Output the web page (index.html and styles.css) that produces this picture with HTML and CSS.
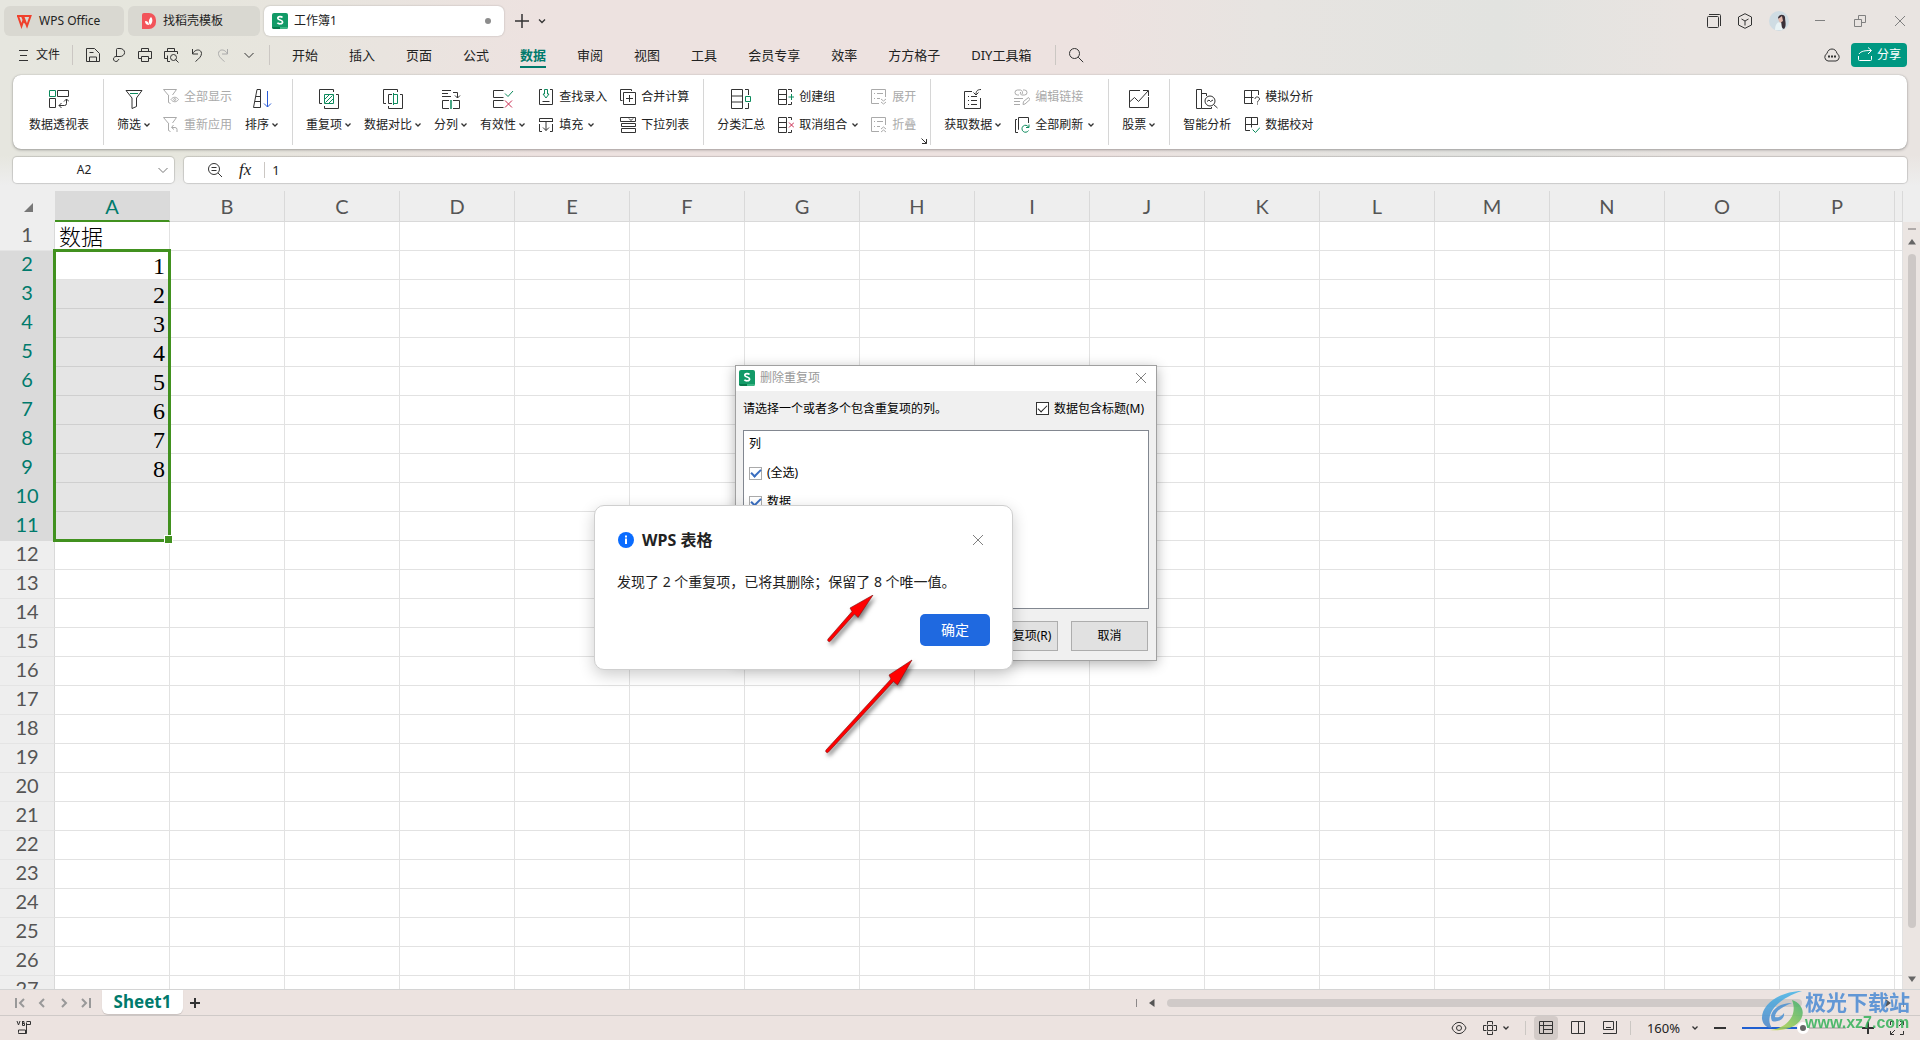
FILE: index.html
```html
<!DOCTYPE html>
<html lang="zh-CN">
<head>
<meta charset="utf-8">
<title>工作簿1 - WPS Office</title>
<link rel="stylesheet" href="styles.css">
</head>
<body>
<svg class="defs" aria-hidden="true">
  <symbol id="chev" viewBox="0 0 6 6"><path d="M0.5 1.5 3 4 5.500 1.500" stroke-width="1.300"/></symbol>
  <symbol id="cross" viewBox="0 0 12 12"><path d="M1 1 11 11M11 1 1 11"/></symbol>
  <symbol id="sheet-logo" viewBox="0 0 16 16">
    <rect width="16" height="16" rx="2" fill="#129a67" stroke="none"/>
    <path d="M0 14h8v2H2a2 2 0 0 1-2-2z" fill="#077a4c" stroke="none"/><path d="M8 14h8a2 2 0 0 1-2 2H8z" fill="#3cb684" stroke="none"/>
    <path d="M10.500 4.500C9.500 3.200 5.800 3 5.800 5.200 5.800 7.500 10.600 6.500 10.600 9 10.600 11.300 6.500 11.200 5.400 9.700" stroke="#fff" stroke-width="1.700"/>
  </symbol>
</svg>
<div class="app">
  <header class="chrome">
    <div class="titlebar">
      <button class="doc-tab doc-home"><svg class="ic" width="16" height="16"><path d="M1 3h13.500L11 13 8 5.500 5.500 13 2 3M6 3l3 7" stroke="#f0402c" stroke-width="2"/></svg>WPS Office</button>
      <button class="doc-tab doc-docer"><svg class="ic" width="14" height="16"><path d="M0 2a2 2 0 0 1 2-2h5a7 7 0 0 1 7 7v2a7 7 0 0 1-7 7H0z" fill="#f2545a" stroke="none"/><path d="M3 8c3 0 4 2 4 4-2 0-4-1-4-4zM8 12c-2-3-1-6 1-8 2 2 2 6-1 8z" fill="#fff" stroke="none"/></svg>找稻壳模板</button>
      <button class="doc-tab doc-current"><svg class="ic" width="16" height="16"><use href="#sheet-logo"/></svg>工作簿1<span class="unsaved"></span></button>
      <button class="bare new-tab" aria-label="新建"><svg class="ic" width="14" height="14"><path d="M7 0v14M0 7h14" stroke-width="1.500"/></svg></button>
      <button class="bare" aria-label="标签列表"><svg class="ic" width="8" height="8"><path d="M1 2.500 4 5.500 7 2.500" stroke-width="1.300"/></svg></button>
      <div class="window-tools">
        <button class="bare" aria-label="窗口"><svg class="ic" width="14" height="14"><rect x=".5" y="2.500" width="11" height="11" rx="1"/><path d="M2 .5h10.500a1 1 0 0 1 1 1V12"/></svg></button>
        <button class="bare" aria-label="应用"><svg class="ic" width="16" height="16"><path d="M8 .7 14.500 4v8L8 15.300 1.500 12V4zM4.500 6 8 8l3.500-2M8 8v4.500"/></svg></button>
        <button class="bare" aria-label="账户"><svg width="20" height="20"><circle cx="10" cy="10" r="10" fill="#cfdce3"/><path d="M6 19c0-5 2-8 5-8s3 4 2 8z" fill="#e9f3f5"/><path d="M9 7c1-4 6-4 7-1 0 4 2 9-1 12-3-1-2-4-3-7z" fill="#3a3038"/><path d="M9 8l4-3 1 5-3 2z" fill="#e3b9ad"/></svg></button>
      </div>
      <div class="window-buttons">
        <button class="bare" aria-label="最小化"><svg class="ic pale" width="12" height="12"><path d="M1 5.500h10"/></svg></button>
        <button class="bare" aria-label="还原"><svg class="ic pale" width="12" height="12"><path d="M.5 4.500h7v7h-7zM4.500 4V.5h7v7H8"/></svg></button>
        <button class="bare" aria-label="关闭"><svg class="ic pale" width="12" height="12"><use href="#cross"/></svg></button>
      </div>
    </div>

    <nav class="menubar">
      <button class="bare file-menu"><svg class="ic" width="9" height="12"><path d="M0 1.500h9M1 6.500h7M0 11.500h9"/></svg>文件</button>
      <span class="rule"></span>
      <div class="quick">
        <button class="bare" aria-label="保存"><svg class="ic" width="16" height="16"><path d="M1.500 1.500h8l5 5v8h-13zM4.500 14v-4h7v4M4.500 5.500h4"/></svg></button>
        <button class="bare" aria-label="输出为PDF"><svg class="ic" width="16" height="16"><path d="M5.500 9V2.500a1 1 0 0 1 1-1H9a4 3.500 0 0 1 0 8H5a2.500 2.500 0 1 0 2 4L8 12"/></svg></button>
        <button class="bare" aria-label="打印"><svg class="ic" width="16" height="16"><path d="M4.500 4V1.500h7V4M4 11.500H1.500v-7h13v7H12M4.500 9.500h7v5h-7z"/></svg></button>
        <button class="bare" aria-label="打印预览"><svg class="ic" width="16" height="16"><path d="M4.500 4V1.500h7V4M4 11.500H1.500v-7h13V7M4.500 8.500v6H7"/><circle cx="10.500" cy="10.500" r="3"/><path d="m12.500 12.500 3 3"/></svg></button>
        <button class="bare" aria-label="撤销"><svg class="ic" width="16" height="16"><path d="M3.500 2v5H9M3.500 7C6 1.500 12.500 2 12.500 6.500c0 3-3 5.500-6 8"/></svg></button>
        <button class="bare" aria-label="恢复"><svg class="ic dim" width="16" height="16"><path d="M12.500 2v5H7M12.500 7C10 1.500 3.500 2 3.500 6.500c0 3 3 5.500 6 8"/></svg></button>
        <button class="bare" aria-label="更多"><svg class="ic" width="16" height="16"><path d="m3.500 6 4.500 4.500L12.500 6"/></svg></button>
      </div>
      <span class="rule"></span>
      <div class="tabs">
        <button class="bare">开始</button><button class="bare">插入</button><button class="bare">页面</button><button class="bare">公式</button><button class="bare active">数据</button><button class="bare">审阅</button><button class="bare">视图</button><button class="bare">工具</button><button class="bare">会员专享</button><button class="bare">效率</button><button class="bare">方方格子</button><button class="bare">DIY工具箱</button>
      </div>
      <span class="rule after-tabs"></span>
      <button class="bare" aria-label="搜索"><svg class="ic" width="16" height="16"><circle cx="6.500" cy="6.500" r="5"/><path d="m10.200 10.200 5 5"/></svg></button>
      <div class="menubar-end">
        <button class="bare" aria-label="云端"><svg class="ic" width="18" height="16"><path d="M5 14a4 4 0 0 1-1-7.500C5 .5 13 .5 14 6.500A4 4 0 0 1 13 14z"/><path d="M5 9.500h2M8 9.500h2M11 9.500h2" stroke-width="2"/></svg></button>
        <button class="share"><svg class="ic" width="16" height="16"><path d="M2 7C4 4 8 3.500 14 3.500M11 0.500l3.500 3-3.500 3.500M1.500 9v3.500a1 1 0 0 0 1 1h11a1 1 0 0 0 1-1V9"/></svg>分享</button>
      </div>
    </nav>

    <section class="ribbon" aria-label="数据">
      <div class="group first">
        <button class="big"><svg class="ic" width="20" height="20"><path d="M.5 1.500h6v6h-6z" class="g"/><path d="M8.500 1.500h11v6h-11zM.5 9.500h6v9h-6zM10 16.500h5.500a2 2 0 0 0 2-2V10M12.500 14 10 16.500l2.500 2.500M15 12.500l2.500-2.500 2.500 2.500"/></svg><span>数据透视表</span></button>
      </div>
      <div class="group">
        <button class="big"><svg class="ic" width="20" height="20"><path d="M2 1.500h16L12.500 9v8.500l-4.500 2V9z"/><path d="M6 4.500h8" class="g"/></svg><span>筛选<svg class="ic" width="6" height="6"><use href="#chev"/></svg></span></button>
        <div class="stack">
          <button class="small" disabled><svg class="ic" width="16" height="16"><path d="M6 7 .5.5h13L9.500 6M5.500 7v6.500l2 1M8 10.500c2-3 5.500-3 7.500 0-2 3-5.500 3-7.500 0z"/><circle cx="11.700" cy="10.500" r="1"/></svg>全部显示</button>
          <button class="small" disabled><svg class="ic" width="16" height="16"><path d="M6 7 .5.5h13L9.500 6M5.500 7v6.500l2 1M10.500 8 8.500 10.500l2.500 2M9 10.500h3a2 2 0 0 1 2 2v2.500"/></svg>重新应用</button>
        </div>
        <button class="big"><svg class="ic" width="20" height="20"><path d="M5 .5h3.500v18M5 .5 1.500 18.500h7M4 7.500h4.500M3 12.500h5.500"/><path d="M15.500 2v16M12 14.500l3.500 3.500 3.500-3.500" class="b"/></svg><span>排序<svg class="ic" width="6" height="6"><use href="#chev"/></svg></span></button>
      </div>
      <div class="group">
        <button class="big"><svg class="ic" width="20" height="20"><path d="M3 14.500H.5V.5h14V3M17 5.500h2.500v14h-14V17"/><path d="M5.500 5.500h9v9h-9zM5.500 10.500l5-5M6.500 13.500l7-7M9.500 14.500l5-5" class="g"/></svg><span>重复项<svg class="ic" width="6" height="6"><use href="#chev"/></svg></span></button>
        <button class="big"><svg class="ic" width="20" height="20"><path d="M3 14.500H.5V.5h14V3M17 5.500h2.500v14h-14V17M9 5.500H5.500v9H9"/><path d="M10.500 5.500h4v9h-4zM10.500 4v12" class="g"/></svg><span>数据对比<svg class="ic" width="6" height="6"><use href="#chev"/></svg></span></button>
        <button class="big"><svg class="ic" width="20" height="20"><path d="M1 1.500h9M1 4.500h6M1 7.500h9M12 3.500h4.500V9M14 6.500 16.500 9 19 6.500M8 11.500H1.500v8H8M12 11.500h6.500v8H12"/><path d="M10 11v9" class="g" stroke-width="1.500"/></svg><span>分列<svg class="ic" width="6" height="6"><use href="#chev"/></svg></span></button>
        <button class="big"><svg class="ic" width="22" height="20"><path d="M11.500 1.500h-10v7h10M11.500 11.500h-10v7h10"/><path d="m13 4.500 3 3L21 2" class="g"/><path d="m13 11.500 7 7M20 11.500l-7 7" class="r"/></svg><span>有效性<svg class="ic" width="6" height="6"><use href="#chev"/></svg></span></button>
        <div class="stack">
          <button class="small"><svg class="ic" width="16" height="16"><path d="M4 .5H1.500v15h13V.5H12M4.500 12.500h7"/><path d="M6.500.5h3V5H11L8 9 5 5h1.500z" class="g"/></svg>查找录入</button>
          <button class="small"><svg class="ic" width="16" height="16"><path d="M4 14.500H1.500V7M12 14.500h2.500V7M1.500 5V1.500h13V5M1 4.500h14M8 5v8.500M5 10.500l3 3 3-3"/></svg>填充<svg class="ic more" width="6" height="6"><use href="#chev"/></svg></button>
        </div>
        <div class="stack">
          <button class="small"><svg class="ic" width="16" height="16"><path d="M2.500 11.500h-2v-11h11V2M3.500 3.500h12v12h-12zM9.500 6v7M6 9.500h7"/></svg>合并计算</button>
          <button class="small"><svg class="ic" width="16" height="16"><path d="M.5.5h15v4H.5zM1.500 6.500h14v3h-14zM1.500 11.500h14v4h-14zM9 1.500l2 2 2-2"/></svg>下拉列表</button>
        </div>
      </div>
      <div class="group">
        <button class="big"><svg class="ic" width="22" height="20"><path d="M1.500.5h11v19h-11zM1.500 7h11M1.500 13h11M15 .5h3.500V6M18.500 14v5.500H15"/><path d="M15.500 7.500h5v5h-5z" class="g"/></svg><span>分类汇总</span></button>
        <div class="stack">
          <button class="small"><svg class="ic" width="16" height="16"><path d="M.5.5h8v15h-8zM.5 5.500h8M.5 10.500h8M10 .5h3.500V3M13.500 13v2.500H10"/><path d="M13.500 5v6M10.500 8H16" class="g"/></svg>创建组</button>
          <button class="small"><svg class="ic" width="16" height="16"><path d="M.5.5h8v15h-8zM.5 5.500h8M.5 10.500h8M10 .5h3.500V3M13.500 13v2.500H10"/><path d="m11 5.500 5 5M16 5.500l-5 5" class="r"/></svg>取消组合<svg class="ic more" width="6" height="6"><use href="#chev"/></svg></button>
        </div>
        <div class="stack">
          <button class="small" disabled><svg class="ic" width="16" height="16"><path d="M8 14.500H.5V.5h14V8M3 4.500h1M6 4.500h6M3 9.500h1M6 9.500h3M10 10l2.500 2L15 10M10 13l2.500 2 2.500-2"/></svg>展开</button>
          <button class="small" disabled><svg class="ic" width="16" height="16"><path d="M8 14.500H.5V.5h14V8M3 4.500h1M6 4.500h6M3 9.500h1M6 9.500h3M10 12l2.500-2 2.500 2M10 15l2.500-2 2.500 2"/></svg>折叠</button>
        </div>
        <button class="bare launcher" aria-label="更多设置"><svg class="ic" width="8" height="8"><path d="m1.500 1.500 5 5M6.500 2v4.500H2"/></svg></button>
      </div>
      <div class="group">
        <button class="big"><svg class="ic" width="20" height="20"><path d="M9 2.500H1.500v17h16V9M5 7.500h1M8 7.500h6M5 11.500h1M8 11.500h6M5 15.500h1M8 15.500h6M18 .5c-4 0-5 2-5 5M10.500 3.500 13 6l2.500-2.500"/></svg><span>获取数据<svg class="ic" width="6" height="6"><use href="#chev"/></svg></span></button>
        <div class="stack">
          <button class="small" disabled><svg class="ic" width="16" height="16"><path d="M5 6H3.500a2.500 2.500 0 0 1 0-5h3a2.500 2.500 0 0 1 1.500 4M9 1h1.500a2.500 2.500 0 0 1 0 5h-3a2.500 2.500 0 0 1-1-3M0 9.500h9M0 12.500h6M0 15.500h6M9 15.500l.5-3 5-4 1.500 2-5 4.500z"/></svg>编辑链接</button>
          <button class="small"><svg class="ic" width="16" height="16"><path d="M3 2.500H1.500v13H4M5 12.500h-.500V.5h10V6"/><path d="M14.500 10a3.500 3.500 0 1 0 0 3.500M15 7.500v3h-3" class="g"/></svg>全部刷新<svg class="ic more" width="6" height="6"><use href="#chev"/></svg></button>
        </div>
      </div>
      <div class="group">
        <button class="big"><svg class="ic" width="22" height="20"><path d="M12 1.500H1.500v17h19V8M1.500 13l5-4.500 4 4L20 2M15 1.500h5.500V7"/></svg><span>股票<svg class="ic" width="6" height="6"><use href="#chev"/></svg></span></button>
      </div>
      <div class="group last">
        <button class="big"><svg class="ic" width="22" height="20"><path d="M.5.5h5v19h-5zM5.500 4.500h5V7M5.500 19.500h10V18"/><circle cx="14" cy="12" r="5"/><path d="m17.500 15.500 4 3.500M11 12.500l2-1.500 1.500 1.500L17 11"/></svg><span>智能分析</span></button>
        <div class="stack">
          <button class="small"><svg class="ic" width="16" height="16"><path d="M.5 1.500h14V6M7.500 1.500v13M.5 1.500v13H9M.5 8.500h9M11 10c0-3 4.500-2.500 4.500 0 0 1.500-2 1.500-2 3.500M13.500 14.500v1"/></svg>模拟分析</button>
          <button class="small"><svg class="ic" width="16" height="16"><path d="M6 13.500H1.500v-13h12V8M1.500 7.500h12M7.500.5v10"/><path d="m8.500 12.500 3 3 4.500-5" class="g"/></svg>数据校对</button>
        </div>
      </div>
    </section>

    <div class="formula-row">
      <div class="name-box"><input aria-label="名称框" value="A2"><svg class="ic" width="10" height="8"><path d="m.5 2 4.500 4.500L9.500 2" stroke="#777"/></svg></div>
      <div class="formula">
        <button class="bare" aria-label="缩小"><svg class="ic" width="16" height="16"><circle cx="7" cy="7" r="5.500"/><path d="M4.500 5.500h5M4.500 8.500h5M11 11l4 4"/></svg></button>
        <button class="bare fx" aria-label="插入函数">fx</button>
        <span class="rule"></span>
        <input aria-label="编辑栏" value="1">
      </div>
    </div>
  </header>

  <main class="workspace">
    <div class="sheet">
      <table class="grid" id="grid"></table>
      <div class="selection"></div>
    </div>
    <div class="vscroll">
      <span class="split"></span>
      <svg width="8" height="6"><path d="M0 5.500 4 0 8 5.500z" fill="#666"/></svg>
      <span class="vthumb"></span>
      <svg width="8" height="6"><path d="M0 .5 4 6 8 .5z" fill="#666"/></svg>
    </div>
  </main>

  <footer>
    <div class="sheetbar">
      <div class="sheet-nav">
        <button class="bare" aria-label="第一张"><svg class="ic nav" width="10" height="10"><path d="M1 0v10M9 1 5 5l4 4"/></svg></button>
        <button class="bare" aria-label="上一张"><svg class="ic nav" width="10" height="10"><path d="M7 1 3 5l4 4"/></svg></button>
        <button class="bare" aria-label="下一张"><svg class="ic nav" width="10" height="10"><path d="m3 1 4 4-4 4"/></svg></button>
        <button class="bare" aria-label="最后一张"><svg class="ic nav" width="10" height="10"><path d="M9 0v10M1 1l4 4-4 4"/></svg></button>
      </div>
      <button class="sheet-tab">Sheet1</button>
      <button class="bare" aria-label="新建工作表"><svg class="ic" width="10" height="10"><path d="M5 0v10M0 5h10" stroke-width="2"/></svg></button>
      <div class="hscroll">
        <span class="hsplit"></span>
        <svg width="6" height="8"><path d="M5.500 0 0 4l5.500 4z" fill="#555"/></svg>
        <span class="htrack"><span class="hthumb"></span></span>
        <svg width="6" height="8"><path d="M.5 0 6 4 .5 8z" fill="#555"/></svg>
        <span class="hsplit"></span>
      </div>
    </div>
    <div class="status">
      <button class="bare" aria-label="宏"><svg class="ic" width="16" height="14"><path d="M1 0l1.500 4L4 0M6.500 0v4.500M6.500.5H8v2H6.500 8.500v2h-2M10.500 1.500v11H4M10.500.5h4v3h-4M2.500 11.500V9h7v3.500h-7z"/></svg></button>
      <div class="status-end">
        <button class="bare" aria-label="护眼模式"><svg class="ic" width="16" height="16"><path d="M1 8c3-7.500 11-7.500 14 0-3 7.500-11 7.500-14 0z"/><circle cx="8" cy="8" r="2.500"/></svg></button>
        <button class="bare reading" aria-label="阅读模式"><svg class="ic" width="14" height="14"><path d="M4.500 3.500v-3h5v3M4.500 10.500v3h5v-3M3.500 4.500h-3v5h3M10.500 4.500h3v5h-3M4.500 4.500h5v5h-5z"/></svg><svg class="ic" width="6" height="6"><use href="#chev"/></svg></button>
        <span class="rule"></span>
        <button class="view on" aria-label="普通视图"><svg class="ic" width="14" height="14"><path d="M.5.5h13v12H.5zM.5 4.500h13M4.500.5v12M4.500 8.500h9"/></svg></button>
        <button class="view" aria-label="分页预览"><svg class="ic" width="14" height="14"><path d="M.5.5h13v12H.5zM7.500.5v12"/></svg></button>
        <button class="view" aria-label="页面布局"><svg class="ic" width="14" height="14"><path d="M.5.5h10v8H.5zM13.500 0v12.500H0M3 6.500h5"/></svg></button>
        <span class="rule after-views"></span>
        <button class="bare zoom-value">160%<svg class="ic" width="6" height="6"><use href="#chev"/></svg></button>
        <button class="bare" aria-label="缩小"><svg class="ic" width="12" height="12"><path d="M0 6h12" stroke-width="2"/></svg></button>
        <input class="zoom" type="range" min="10" max="260" value="160" aria-label="缩放">
        <button class="bare" aria-label="放大"><svg class="ic" width="12" height="12"><path d="M0 6h12M6 0v12" stroke-width="2"/></svg></button>
        <button class="bare" aria-label="全屏"><svg class="ic" width="14" height="14"><path d="M.5 4V.5H4M10 .5h3.500V4M13.500 10v3.500H10M4 13.500H.5V10M9 5l4.500-4.500M5 9 .5 13.500"/></svg></button>
      </div>
    </div>
  </footer>

  <section class="dedupe" role="dialog" aria-label="删除重复项">
    <div class="dedupe-title"><svg class="ic" width="16" height="16"><use href="#sheet-logo"/></svg><span>删除重复项</span><button class="bare" aria-label="关闭"><svg class="ic pale" width="12" height="12"><use href="#cross"/></svg></button></div>
    <div class="dedupe-head"><span>请选择一个或者多个包含重复项的列。</span><label class="check dark"><input type="checkbox" checked>数据包含标题(M)</label></div>
    <div class="columns">
      <span>列</span>
      <label class="check"><input type="checkbox" checked>(全选)</label>
      <label class="check"><input type="checkbox" checked>数据</label>
    </div>
    <div class="dedupe-actions"><button>删除重复项(R)</button><button>取消</button></div>
  </section>

  <section class="message" role="alertdialog" aria-label="WPS 表格">
    <div class="message-title">
      <svg width="16" height="16"><circle cx="8" cy="8" r="8" fill="#0a6cff"/><path d="M7 6.500h2V12H7zM7 3.500h2v2H7z" fill="#fff"/></svg>
      <h2>WPS 表格</h2>
      <button class="bare" aria-label="关闭"><svg class="ic pale" width="12" height="12"><use href="#cross"/></svg></button>
    </div>
    <p>发现了 2 个重复项，已将其删除；保留了 8 个唯一值。</p>
    <button class="confirm">确定</button>
  </section>

  <svg class="arrows" width="100" height="170" aria-hidden="true">
    <g fill="#f00" stroke="#7a1010" stroke-width=".6">
      <path d="M8 44 32 16.500 30 13 53 0 38 22.500 34.500 19 10.500 46a1.500 1.500 0 0 1-2.500-2z"/>
      <path d="M6 155 71 84 69 80 92 65 77.500 90 73.500 86.500 8.500 157a1.500 1.500 0 0 1-2.500-2z"/>
    </g>
  </svg>

  <div class="watermark">
    <svg width="44" height="42" viewBox="0 0 44 42">
      <defs><linearGradient id="swirl" x1="0" y1="0" x2="0" y2="1"><stop offset="0" stop-color="#45b5e8"/><stop offset="1" stop-color="#4a83c8"/></linearGradient>
      <linearGradient id="leaf" x1="1" y1="0" x2="0" y2="1"><stop offset="0" stop-color="#3aae6e"/><stop offset="1" stop-color="#c8dc4a"/></linearGradient></defs>
      <path d="M41 1C20 1 0 14 1 29c1 6 5 9 10 9C4 29 10 11 41 1z" fill="url(#swirl)"/>
      <path d="M31 10c14 5 14 19 2 26-8 4-17 5-24 4 13-1 29-12 22-30z" fill="url(#leaf)"/>
      <path d="M31 13c-15 0-24 10-20 18 6 2 13-2 12-8-3 4-7 5-9 4 0-6 7-10 17-14z" fill="#4a90d2"/>
    </svg>
    <div><strong>极光下载站</strong><span>www.xz7.com</span></div>
  </div>
</div>
<script src="grid.js"></script>
</body>
</html>
```
FILE: styles.css
```css
* { box-sizing: border-box; }

body {
  margin: 0;
  font: 12px/16px "Noto Sans", "Noto Sans CJK SC", sans-serif;
  color: #222;
}

button, input {
  font: inherit;
  color: inherit;
}

button {
  border: 0;
  background: none;
  padding: 0;
  white-space: nowrap;
}

.defs { position: absolute; width: 0; height: 0; }

.ic { fill: none; stroke: #333; flex: none; display: block; }
.ic.pale { stroke: #808080; }
.ic.dim { stroke: #aaa; }
.ic.nav { stroke: #999; stroke-width: 2; }
.ic .g { stroke: #0c8a5c; }
.ic .b { stroke: #2a5bd7; }
.ic .r { stroke: #c8284f; }

.bare { display: flex; align-items: center; }
.rule { width: 1px; height: 20px; background: #cbc7c3; flex: none; }

.app {
  position: relative;
  display: flex;
  flex-direction: column;
  height: 100vh;
  overflow: hidden;
}

/* Title bar, menu and ribbon */
.chrome {
  background:
    linear-gradient(180deg, rgba(238, 238, 238, 0) 155px, #eee 186px),
    linear-gradient(90deg, #e6e6df 0%, #e6e6dd 9%, #e9e4df 20%, #ede2e0 28%, #ede2e0 57%, #e7e4e1 66%, #e2e3e0 78%, #e9e4e1 88%, #e9e4e1 100%);
  padding-bottom: 8px;
}

.titlebar {
  display: flex;
  align-items: center;
  gap: 4px;
  height: 42px;
  padding: 0 14px 0 4px;
}

.doc-tab {
  display: flex;
  align-items: center;
  gap: 7px;
  height: 30px;
  padding: 0 12px;
  border-radius: 6px;
  background: #d9d8d1;
}
.doc-home { width: 120px; }
.doc-docer { width: 132px; padding-left: 14px; }
.doc-current {
  width: 240px;
  padding: 0 13px 0 8px;
  gap: 6px;
  background: #fff;
  box-shadow: 0 0 2px rgba(0, 0, 0, .25);
}
.unsaved { width: 6px; height: 6px; border-radius: 3px; background: #8c8c8c; margin-left: auto; }
.new-tab { margin: 0 5px 0 7px; }

.window-tools { display: flex; align-items: center; gap: 16px; margin-left: auto; }
.window-buttons { display: flex; align-items: center; gap: 28px; margin-left: 21px; }

.menubar {
  display: flex;
  align-items: center;
  height: 26px;
  padding: 0 13px 0 19px;
  margin-bottom: 7px;
}
.file-menu { gap: 8px; width: 53px; }
.quick { display: flex; gap: 10px; padding: 0 12px; }
.tabs { display: flex; gap: 31px; margin-left: 22px; font-size: 13px; }
.tabs button { height: 26px; }
.tabs .active { color: #007a6c; font-weight: 600; box-shadow: inset 0 -2px #007a6c; }
.after-tabs { margin: 0 12px 0 24px; }
.menubar-end { display: flex; align-items: center; gap: 10px; margin-left: auto; }
.share {
  display: flex;
  align-items: center;
  gap: 4px;
  height: 24px;
  padding: 0 6px;
  border-radius: 4px;
  background: #009882;
  color: #fff;
}
.share .ic { stroke: #fff; }

.ribbon {
  display: flex;
  height: 74px;
  margin: 0 13px;
  padding: 4px 0;
  border-radius: 8px;
  background: #fff;
  box-shadow: 0 0 1px rgba(0, 0, 0, .3), 0 1px 3px rgba(0, 0, 0, .3);
}
.group {
  position: relative;
  display: flex;
  gap: 13px;
  padding: 10px 14px 0 13px;
  border-right: 1px solid #d6d6d6;
}
.group.first { padding-left: 16px; }
.group.last { border-right: 0; }
.big {
  display: flex;
  flex-direction: column;
  align-items: center;
  gap: 8px;
  height: 46px;
}
.big span { display: flex; align-items: center; gap: 3px; }
.stack { display: flex; flex-direction: column; gap: 12px; }
.small { display: flex; align-items: center; gap: 5px; height: 16px; }
.small:disabled { color: #aaa; }
.small:disabled .ic { stroke: #aaa; }
.launcher { position: absolute; right: 2px; bottom: 0; }

.formula-row { display: flex; gap: 10px; margin: 8px 13px 0; }
.formula-row > div {
  display: flex;
  align-items: center;
  height: 26px;
  border-radius: 4px;
  background: #fff;
  box-shadow: 0 0 1px 1px rgba(0, 0, 0, .15);
}
.formula-row input { border: 0; background: none; min-width: 0; padding: 0; outline: 0; }
.name-box { width: 161px; padding-right: 6px; }
.name-box input { flex: 1; text-align: center; padding-right: 3px; }
.formula { flex: 1; padding-left: 23px; }
.formula input { flex: 1; font-size: 13px; }
.formula .rule { margin: 0 7px 0 13px; height: 16px; }
.fx { margin-left: 16px; font: italic 17px/20px "Liberation Serif", serif; }

/* Worksheet */
.workspace { display: flex; flex: 1; min-height: 0; background: #eee; border-bottom: 1px solid #d4d4d4; }
.sheet { position: relative; flex: 1; min-width: 0; overflow: hidden; background: #fff; }
.grid { width: 100%; table-layout: fixed; border-collapse: separate; border-spacing: 0; }
.grid .col-head { width: 55px; }
.grid .col { width: 115px; }
.grid th {
  padding: 0;
  background: #eee;
  border: 0 solid #d9d9d9;
  border-width: 0 1px 1px 0;
  color: #555;
  font: 20px/24px Lato, sans-serif;
}
.grid thead th { height: 31px; }
.grid tbody th { height: 29px; padding-bottom: 4px; border-bottom-color: #e4e4e4; }
.grid td {
  height: 29px;
  padding: 3px 4px 0;
  border: 0 solid #e2e2e2;
  border-width: 0 1px 1px 0;
  color: #000;
  font: 300 22px/25px "Liberation Serif", "Noto Sans CJK SC", serif;
}
.grid .number { text-align: right; font-size: 24px; }
.grid th.picked { background: #dadada; border-bottom-color: #dadada; color: #007a6c; }
.grid thead th.picked { border-bottom: 2px solid #41911f; }
.grid .shade { background: #e5e5e5; border-bottom-color: #cfcfcf; }
.grid .corner { border-width: 0; }
.grid .corner svg { display: block; margin: 2px 0 0 24px; }

.selection {
  position: absolute;
  left: 53px;
  top: 58px;
  width: 118px;
  height: 293px;
  border: 3px solid #41911f;
}
.selection::after {
  content: "";
  position: absolute;
  right: -5px;
  bottom: -5px;
  width: 7px;
  height: 7px;
  background: #41911f;
  border: 1px solid #fff;
}

.vscroll {
  display: flex;
  flex-direction: column;
  align-items: center;
  gap: 9px;
  width: 17px;
  margin-top: 31px;
  padding: 6px 0 7px;
  background: #ebe5e2;
}
.split { width: 8px; height: 2px; background: #b0abaa; }
.vthumb { width: 8px; height: 674px; border-radius: 4px; background: #cdc8c6; margin-bottom: auto; }

/* Sheet tabs and status bar */
footer { background: #ece3e0; }
.sheetbar { display: flex; align-items: center; height: 26px; padding: 0 16px 0 15px; border-bottom: 1px solid #cfcac8; }
.sheet-nav { display: flex; gap: 12px; width: 87px; }
.sheet-tab {
  align-self: flex-start;
  width: 81px;
  height: 24px;
  margin-right: 7px;
  border-radius: 0 0 6px 6px;
  background: #fff;
  box-shadow: 0 1px 1px rgba(0, 0, 0, .15);
  color: #007a6c;
  font-weight: 700;
  font-size: 17px;
}
.hscroll { display: flex; align-items: center; gap: 12px; width: calc(40% + 12px); margin-left: auto; }
.hsplit { width: 1px; height: 8px; background: #8c8888; }
.htrack { flex: 1; }
.hthumb { display: block; width: 90%; height: 8px; border-radius: 4px; background: #d0cac8; }

.status { display: flex; align-items: center; height: 24px; padding: 0 16px; }
.status-end { display: flex; align-items: center; gap: 16px; margin-left: auto; }
.reading { gap: 6px; }
.status .rule { height: 14px; }
.status .after-views { margin-left: -8px; }
.view { display: flex; align-items: center; justify-content: center; width: 24px; height: 24px; border-radius: 4px; }
.view + .view { margin-left: -8px; }
.view.on { background: #d3cbc8; margin-left: -8px; }
.zoom-value { gap: 12px; font-size: 13px; }
.zoom {
  appearance: none;
  width: 104px;
  height: 2px;
  margin: 0;
  background: linear-gradient(90deg, #1f5fd0 60%, #c4bdbb 60%);
}
.zoom::-webkit-slider-thumb {
  appearance: none;
  width: 12px;
  height: 12px;
  border: 3px solid #fff;
  border-radius: 6px;
  background: #666;
}

/* Remove-duplicates window */
.dedupe {
  position: absolute;
  left: 735px;
  top: 365px;
  width: 422px;
  height: 296px;
  border: 1px solid #a0a0a0;
  background: #f0f0f0;
  box-shadow: 0 3px 12px rgba(0, 0, 0, .3);
  color: #000;
}
.dedupe-title { display: flex; align-items: center; gap: 5px; height: 25px; padding: 0 9px 2px 3px; background: #fff; color: #999; }
.dedupe-title .bare { margin-left: auto; }
.dedupe-head { display: flex; justify-content: space-between; align-items: center; height: 35px; padding: 0 12px 0 7px; }
.check { display: flex; align-items: center; gap: 5px; }
.check input {
  appearance: none;
  width: 13px;
  height: 13px;
  margin: 0;
  border: 1px solid #aaa;
  background: #fff;
  color: #3a6ec0;
  display: grid;
  place-items: center;
}
.check input:checked::before {
  content: "";
  width: 8px;
  height: 4px;
  margin-bottom: 2px;
  border: solid currentColor;
  border-width: 0 0 2px 2px;
  transform: rotate(-45deg);
}
.check.dark input { border-color: #333; color: #222; }
.check.dark input:checked::before { border-width: 0 0 1px 1px; }
.columns {
  display: flex;
  flex-direction: column;
  gap: 13px;
  height: 179px;
  margin: 4px 7px 0;
  padding: 5px;
  border: 1px solid #828790;
  background: #fff;
}
.dedupe-actions { display: flex; justify-content: flex-end; gap: 13px; margin: 12px 8px 0; }
.dedupe-actions button { width: 77px; height: 30px; border: 1px solid #adadad; background: #e1e1e1; }
.dedupe-actions button:first-child { width: 88px; }

/* Result message */
.message {
  position: absolute;
  left: 594px;
  top: 505px;
  width: 419px;
  height: 165px;
  padding: 22px 22px 23px;
  display: flex;
  flex-direction: column;
  border: 1px solid #cfcfcf;
  border-radius: 10px;
  background: #fff;
  box-shadow: 0 5px 16px rgba(0, 0, 0, .2);
  font-size: 14px;
  line-height: 20px;
}
.message-title { display: flex; align-items: center; gap: 8px; padding: 0 6px 0 1px; }
.message-title .bare { margin-left: auto; }
.message h2 { margin: 0; font-size: 16px; line-height: 24px; }
.message p { margin: 20px 0 0; }
.confirm { width: 70px; height: 32px; margin: auto 0 0 auto; border-radius: 5px; background: #1f69e0; color: #fff; }

.arrows { position: absolute; left: 820px; top: 595px; filter: drop-shadow(2px 3px 2px rgba(0, 0, 0, .5)); }

.watermark {
  position: absolute;
  right: 10px;
  bottom: 8px;
  display: flex;
  align-items: flex-end;
  opacity: .85;
  pointer-events: none;
}
.watermark div { display: flex; flex-direction: column; }
.watermark strong { color: #4a8ad4; font-size: 21px; line-height: 24px; }
.watermark span { color: #35b25a; font: 700 16px/18px "Liberation Sans", sans-serif; }
```
FILE: grid.js
```js
const letters = "ABCDEFGHIJKLMNOP".split("");
const values = ["数据", 1, 2, 3, 4, 5, 6, 7, 8];
const rowCount = 27;
const isPicked = (row) => row >= 2 && row <= 11;

let html = '<colgroup><col class="col-head">' + letters.map(() => '<col class="col">').join("") + "<col></colgroup>";
html += '<thead><tr><th class="corner"><svg width="9" height="9"><path d="M9 0v9H0z" fill="#777"/></svg></th>';
html += letters.map((l) => `<th class="${l === "A" ? "picked" : ""}">${l}</th>`).join("") + "<th></th></tr></thead><tbody>";

for (let row = 1; row <= rowCount; row++) {
  const value = values[row - 1] ?? "";
  const classes = [];
  if (typeof value === "number") classes.push("number");
  if (isPicked(row) && row > 2) classes.push("shade");
  html += `<tr><th class="${isPicked(row) ? "picked" : ""}">${row}</th><td class="${classes.join(" ")}">${value}</td>`;
  html += "<td></td>".repeat(letters.length) + "</tr>";
}

document.getElementById("grid").innerHTML = html + "</tbody>";
```
